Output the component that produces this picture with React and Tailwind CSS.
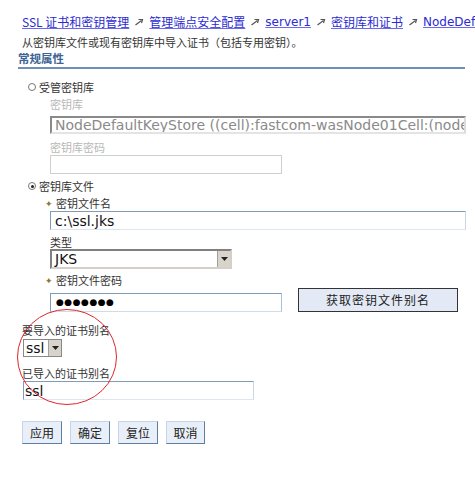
import React from "react";

const cjk = { fontFamily: '"Noto Sans CJK SC", "Noto Sans", sans-serif' };
const lat = { fontFamily: '"DejaVu Sans", "Noto Sans CJK SC", sans-serif' };

function Sep() {
  return (
    <svg width="10" height="10" viewBox="0 0 10 10" className="mx-[5px] shrink-0 block">
      <path d="M1.5 8 L7.5 3.5" stroke="#555" strokeWidth="1.2" fill="none" />
      <path d="M4.5 2.5 L8.5 2.5 L7.5 6" stroke="#555" strokeWidth="1.2" fill="none" />
    </svg>
  );
}

function Crumb({ children, latin }) {
  return (
    <span
      style={latin ? lat : cjk}
      className="shrink-0 text-[12px] leading-[14px] text-[#2b2bd0] underline decoration-[#6a6af0]"
    >
      {children}
    </span>
  );
}

function DropBtn({ h }) {
  return (
    <div className={`w-[13px] ${h} bg-[#d8d4cc] border-l border-[#a0a0a0] flex items-center justify-center`}>
      <svg width="7" height="4" viewBox="0 0 7 4"><path d="M0 0 L7 0 L3.5 4 Z" fill="#222" /></svg>
    </div>
  );
}

function Btn({ children, className = "" }) {
  return (
    <div
      className={`h-[23px] flex items-center justify-center text-[12px] text-[#222] bg-[#e9eff8] border border-t-[#c5d3e6] border-l-[#c5d3e6] border-r-[#5d7fa6] border-b-[#5d7fa6] ${className}`}
      style={cjk}
    >
      {children}
    </div>
  );
}

export default function App() {
  return (
    <div className="relative w-[475px] h-[478px] overflow-hidden bg-white text-[#222]" style={cjk}>
      <div className="flex flex-col">
        {/* breadcrumb */}
        <div className="mt-[15px] pl-[22px] h-[14px] whitespace-nowrap flex items-center">
          <Crumb>SSL 证书和密钥管理</Crumb>
          <Sep />
          <Crumb>管理端点安全配置</Crumb>
          <Sep />
          <Crumb latin>server1</Crumb>
          <Sep />
          <Crumb>密钥库和证书</Crumb>
          <Sep />
          <Crumb latin>NodeDefaultKeyStore</Crumb>
        </div>
        {/* description */}
        <div className="mt-[7px] pl-[22px] h-[13px] leading-[13px] text-[11px] whitespace-nowrap text-[#333]">
          从密钥库文件或现有密钥库中导入证书（包括专用密钥）。
        </div>
        {/* section header */}
        <div className="mt-[3px] pl-[18px] h-[13px] leading-[13px] text-[11.5px] font-bold text-[#3d6494]">
          常规属性
        </div>
        <div className="mt-[2px] ml-[18px] w-[447px] h-[2px] bg-[#6f8fb8]" />

        {/* managed keystore radio */}
        <div className="mt-[12px] pl-[28px] h-[12px] flex items-center text-[11px] text-[#333]">
          <span className="w-[8px] h-[8px] rounded-full border border-[#777] mr-[3px]" />
          受管密钥库
        </div>
        <div className="mt-[5px] pl-[50px] h-[12px] leading-[12px] text-[11px] text-[#b8b8b8]">密钥库</div>
        <div className="mt-[6px] ml-[50px] w-[416px] h-[18px] border-2 border-t-[#8a8a8a] border-l-[#8a8a8a] border-r-[#dcdcdc] border-b-[#e4e4e4] bg-white flex items-center pl-[3px] overflow-hidden whitespace-nowrap">
          <span style={lat} className="text-[14px] text-[#8a8a8a] leading-none">
            NodeDefaultKeyStore ((cell):fastcom-wasNode01Cell:(node):fastcom-wasNode01)
          </span>
        </div>
        <div className="mt-[7px] pl-[50px] h-[12px] leading-[12px] text-[11px] text-[#b8b8b8]">密钥库密码</div>
        <div className="mt-[2px] ml-[50px] w-[232px] h-[19px] border border-[#cfcfcf] bg-white" />

        {/* keystore file radio */}
        <div className="mt-[6px] pl-[28px] h-[12px] flex items-center text-[11px] text-[#333]">
          <span className="w-[8px] h-[8px] rounded-full border border-[#777] mr-[3px] flex items-center justify-center">
            <span className="w-[3px] h-[3px] rounded-full bg-[#222]" />
          </span>
          密钥库文件
        </div>
        <div className="mt-[5px] pl-[45px] h-[12px] flex items-center text-[11px] text-[#333]">
          <span className="text-[#8a7a2a] text-[9px] mr-[3px] leading-none">✦</span>
          密钥文件名
        </div>
        <div className="mt-[2px] ml-[50px] w-[416px] h-[19px] border border-t-[#7f9db9] border-l-[#7f9db9] border-r-[#c9d7e8] border-b-[#dde6f0] bg-white flex items-center pl-[4px]">
          <span style={lat} className="text-[14px] text-[#111] leading-none">c:\ssl.jks</span>
        </div>
        <div className="mt-[6px] pl-[50px] h-[12px] leading-[12px] text-[11px] text-[#333]">类型</div>
        <div className="mt-[1px] ml-[50px] w-[182px] h-[20px] border-2 border-t-[#808080] border-l-[#808080] border-r-[#d4d0c8] border-b-[#d4d0c8] bg-white flex items-center">
          <span style={lat} className="flex-1 pl-[3px] text-[14px] text-[#111] leading-none">JKS</span>
          <DropBtn h="h-[16px]" />
        </div>
        <div className="mt-[5px] pl-[45px] h-[12px] flex items-center text-[11px] text-[#333]">
          <span className="text-[#8a7a2a] text-[9px] mr-[3px] leading-none">✦</span>
          密钥文件密码
        </div>
        <div className="mt-[2px] flex items-start">
          <div className="mt-[5px] ml-[50px] w-[232px] h-[19px] border border-t-[#7f9db9] border-l-[#7f9db9] border-r-[#a9c1dc] border-b-[#cfdcec] bg-white flex items-center pl-[5px]">
            <span style={lat} className="text-[9px] text-[#000] tracking-[0.5px] leading-none">●●●●●●●</span>
          </div>
          <div
            className="ml-[16px] w-[160px] h-[24px] border border-[#333] bg-[#e3eaf5] flex items-center justify-center text-[12px] text-[#222] tracking-[1px]"
            style={cjk}
          >
            获取密钥文件别名
          </div>
        </div>

        {/* alias */}
        <div className="mt-[12px] pl-[22px] h-[12px] leading-[12px] text-[11px] text-[#333]">要导入的证书别名</div>
        <div className="mt-[3px] ml-[23px] w-[39px] h-[18px] border border-[#888] bg-white flex items-center">
          <span style={lat} className="flex-1 pl-[2px] text-[14px] text-[#111] leading-none">ssl</span>
          <DropBtn h="h-[16px]" />
        </div>
        <div className="mt-[10px] pl-[22px] h-[12px] leading-[12px] text-[11px] text-[#333]">已导入的证书别名</div>
        <div className="mt-[2px] ml-[23px] w-[231px] h-[19px] border border-t-[#7f9db9] border-l-[#7f9db9] border-r-[#c9d7e8] border-b-[#dde6f0] bg-white flex items-center pl-[1px]">
          <span style={lat} className="text-[14px] text-[#111] leading-none">ssl</span>
        </div>

        {/* buttons */}
        <div className="mt-[21px] ml-[22px] flex gap-[8px]">
          <Btn className="w-[40px]">应用</Btn>
          <Btn className="w-[40px]">确定</Btn>
          <Btn className="w-[40px]">复位</Btn>
          <Btn className="w-[39px]">取消</Btn>
        </div>
      </div>

      {/* red annotation circle */}
      <svg className="absolute left-[16px] top-[308px]" width="102" height="98" viewBox="0 0 102 98">
        <ellipse cx="51" cy="49" rx="49.5" ry="47.5" fill="none" stroke="#e0262a" strokeWidth="1" />
      </svg>
    </div>
  );
}
